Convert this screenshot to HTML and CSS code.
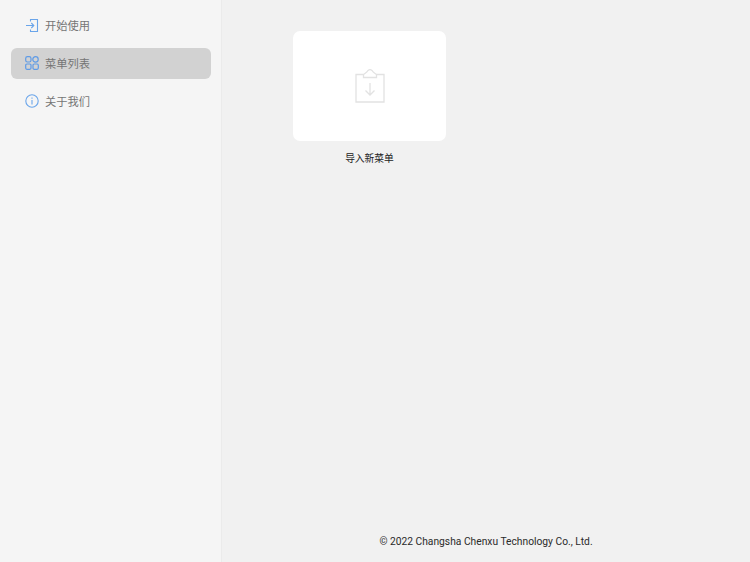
FILE: index.html
```html
<!DOCTYPE html>
<html lang="zh">
<head>
<meta charset="utf-8">
<title>菜单列表</title>
<link rel="stylesheet" href="styles.css">
</head>
<body>
<div class="app">
  <aside class="sidebar">
    <div class="nav-item">
      <svg class="nav-icon" width="14" height="14" viewBox="0 0 14 14" fill="none" stroke="#6aa5ea" stroke-width="1.1"><path d="M5.500 3.500V1.500H12.500V13.500H5.500V11.500"/><path d="M1 7.500H8.800M6.300 5L8.800 7.500 6.300 10"/></svg>
      <span>开始使用</span>
    </div>
    <div class="nav-item active">
      <svg class="nav-icon" width="14" height="14" viewBox="0 0 14 14" fill="none" stroke="#5f9be6" stroke-width="1.200"><rect x=".7" y=".7" width="5.300" height="5.300" rx="1.800"/><circle cx="10.500" cy="3.400" r="2.700"/><rect x=".7" y="8" width="5.300" height="5.300" rx="1.200"/><rect x="8" y="8" width="5.300" height="5.300" rx="1.200"/></svg>
      <span>菜单列表</span>
    </div>
    <div class="nav-item">
      <svg class="nav-icon" width="14" height="14" viewBox="0 0 14 14" fill="none" stroke="#6aa5ea" stroke-width="1.100"><circle cx="7" cy="7" r="6.200"/><path d="M7 6V10.500M7 3.400V4.800"/></svg>
      <span>关于我们</span>
    </div>
  </aside>
  <main class="content">
    <div class="import">
      <div class="import-card">
        <svg width="30" height="34" viewBox="0 0 30 34" fill="none" stroke="#e2e2e2" stroke-width="1.300"><path d="M8.500 5.500H1V33H29V5.500H21.500"/><path d="M8.500 8.500V5.500C10 4.500 12 3.500 13 1.500 14 .7 16 .7 17 1.500 18 3.500 20 4.500 21.500 5.500V8.500Z"/><path d="M15 14V26M10.500 21.500L15 26 19.500 21.500"/></svg>
      </div>
      <div class="import-label">导入新菜单</div>
    </div>
    <footer class="footer">© 2022 Changsha Chenxu Technology Co., Ltd.</footer>
  </main>
</div>
</body>
</html>
```
FILE: styles.css
```css
* { box-sizing: border-box; }
html, body { margin: 0; height: 100%; }
body {
  background: #f1f1f1;
  font-family: "Liberation Sans", "Noto Sans CJK SC", sans-serif;
}
.app { display: flex; width: 750px; height: 562px; overflow: hidden; }
.sidebar {
  width: 222px;
  flex: none;
  background: #f5f5f5;
  border-right: 1px solid #ebebeb;
  padding: 10px 10px 0 11px;
  display: flex;
  flex-direction: column;
  gap: 8px;
}
.nav-item {
  height: 30px;
  border-radius: 6px;
  display: flex;
  align-items: center;
  padding-left: 14px;
  gap: 6px;
  color: #757575;
}
.nav-item span { font-size: 11.25px; }
.nav-item.active { background: #d2d2d2; height: 30.5px; margin-bottom: -.5px; }
.nav-icon { flex: none; }
.content {
  flex: 1;
  display: flex;
  flex-direction: column;
  padding: 31px 0 13px 71px;
}
.import { width: 153px; display: flex; flex-direction: column; align-items: center; gap: 11px; }
.import-card {
  width: 153px;
  height: 110px;
  background: #fff;
  border-radius: 7px;
  display: flex;
  align-items: center;
  justify-content: center;
}
.import-label { font-size: 9.75px; line-height: 14px; color: #222; }
.footer {
  margin-top: auto;
  margin-left: -71px;
  text-align: center;
  font-family: Roboto, "Noto Sans CJK SC", sans-serif;
  font-size: 10.25px;
  line-height: 14px;
  color: #2a2a2a;
}
```
